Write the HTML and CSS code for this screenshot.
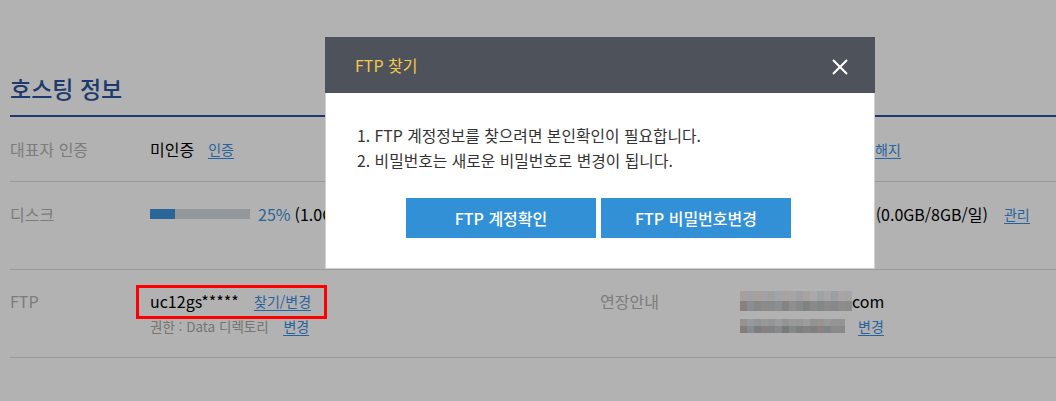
FILE: index.html
```html
<!DOCTYPE html>
<html lang="ko">
<head>
<meta charset="utf-8">
<title>호스팅 정보</title>
<link rel="stylesheet" href="styles.css">
</head>
<body>
<main class="page">
  <h2 class="section-title">호스팅 정보</h2>
  <div class="info">
    <div class="row row--first">
      <div class="label">대표자 인증</div>
      <div class="value">미인증 <a class="link" href="#">인증</a></div>
      <div class="label"></div>
      <div class="value"><span class="spacer"></span><a class="link link--flush" href="#">해지</a></div>
    </div>
    <div class="row row--disk">
      <div class="label">디스크</div>
      <div class="value">
        <span class="bar"><span class="bar-fill" style="width:25%"></span></span>
        <span class="pct">25%</span> (1.0GB/4GB)
      </div>
      <div class="label"></div>
      <div class="value">
        <span class="bar"><span class="bar-fill" style="width:0%"></span></span>
        <span class="pct">0%</span> (0.0GB/8GB/일) <a class="link link--wide" href="#">관리</a>
      </div>
    </div>
    <div class="row row--ftp">
      <div class="label">FTP</div>
      <div class="value stack">
        <div class="line"><span class="marked">uc12gs***** <a class="link" href="#">찾기/변경</a></span></div>
        <div class="line sub">권한 : Data 디렉토리 <a class="link" href="#">변경</a></div>
      </div>
      <div class="label">연장안내</div>
      <div class="value stack">
        <div class="line"><span class="mosaic mosaic--a"></span>com</div>
        <div class="line"><span class="mosaic mosaic--b"></span><a class="link" href="#">변경</a></div>
      </div>
    </div>
  </div>
</main>

<div class="overlay"></div>

<section class="modal" role="dialog" aria-label="FTP 찾기">
  <header class="modal-head">
    <h3 class="modal-title">FTP 찾기</h3>
    <button class="modal-close" type="button" aria-label="닫기">
      <svg width="16" height="16" viewBox="0 0 16 16"><path d="M1 1L15 15M15 1L1 15" stroke="#fff" stroke-width="2" fill="none"/></svg>
    </button>
  </header>
  <div class="modal-body">
    <ol class="notice">
      <li>1. FTP 계정정보를 찾으려면 본인확인이 필요합니다.</li>
      <li>2. 비밀번호는 새로운 비밀번호로 변경이 됩니다.</li>
    </ol>
    <div class="actions">
      <button class="btn" type="button">FTP 계정확인</button>
      <button class="btn" type="button">FTP 비밀번호변경</button>
    </div>
  </div>
</section>
</body>
</html>
```

FILE: styles.css
```css
* { box-sizing: border-box; }
html, body { margin: 0; padding: 0; }
body {
  background: #fff;
  font-family: "Noto Sans CJK KR", "Noto Sans", sans-serif;
  color: #000;
  overflow: hidden;
  width: 1056px;
  height: 401px;
}
.page {
  padding: 70px 0 0 10px;
}
.section-title {
  margin: 0;
  font-size: 23px;
  line-height: 36px;
  font-weight: 500;
  color: #29549d;
  padding-bottom: 9px;
  border-bottom: 2px solid #29549d;
}
.row {
  display: grid;
  grid-template-columns: 140px 450px 140px 1fr;
  padding: 20px 0;
  border-bottom: 1px solid #dcdcdc;
  font-size: 16px;
  line-height: 24px;
}
.row--disk { padding-bottom: 43px; }
.row--ftp { padding: 19px 0 19px; }
.label { color: #b2b2b2; }
.value { display: flex; align-items: center; white-space: nowrap; }
.value.stack { flex-direction: column; align-items: flex-start; }
.line { display: flex; align-items: center; height: 24px; white-space: pre; }
.line + .line { margin-top: 1px; }
.sub { font-size: 13.5px; color: #a8a8a8; }
.link {
  color: #3a8ee6;
  text-decoration: none;
  border-bottom: 1px solid #3a8ee6;
  line-height: 18px;
  display: inline-block;
  margin-left: 14px;
  font-size: 14px;
}
.link--flush { margin-left: 0; }
.link--wide { margin-left: 16px; }
.sub .link { margin-left: 11px; }
.spacer { width: 135px; }
.bar {
  width: 100px;
  height: 10px;
  background: #d4d8db;
  display: inline-block;
  margin-right: 8px;
}
.bar-fill { display: block; height: 100%; background: #3e92db; }
.pct { color: #3e92db; margin-right: 4px; }
.marked { position: relative; display: inline-flex; align-items: center; white-space: pre; font-size: 16px; }
.marked .link { margin-left: 11px; }
.marked::after {
  content: "";
  position: absolute;
  left: -14px; right: -16px; top: -4px; bottom: -6px;
  border: 3px solid #ff0000;
  z-index: 30;
}
.mosaic {
  display: inline-block;
  background-repeat: no-repeat;
}
.mosaic--a {
  width: 112px;
  height: 20px;
  background-image:
    linear-gradient(90deg, #f3e2e2 0 7px, #e3e9ee 7px 14px, #f1e4e4 14px 21px, #e9e9ee 21px 28px, #e8e4e4 28px 35px, #e6ecf0 35px 42px, #f0eaea 42px 49px, #ececec 49px 56px, #e6e6ea 56px 63px, #eeeae6 63px 70px, #f2f2f2 70px 77px, #e5eaea 77px 84px, #eeeeee 84px 91px, #e0e4e8 91px 98px, #f0ecec 98px 105px, #ededed 105px 112px),
    linear-gradient(90deg, #c4b8b8 0 7px, #c6ccd2 7px 14px, #c2c4c4 14px 21px, #cbc6c6 21px 28px, #c4c8cc 28px 35px, #c9cdcd 35px 42px, #bdbdbd 42px 49px, #d0cccc 49px 56px, #c2c6c6 56px 63px, #b8bcbc 63px 70px, #c8c4c4 70px 77px, #bac2c2 77px 84px, #c6c6c6 84px 91px, #c0c4c8 91px 98px, #cacaca 98px 105px, #c8c8c8 105px 112px);
  background-size: 100% 10px, 100% 10px;
  background-position: 0 0, 0 10px;
}
.mosaic--b {
  width: 105px;
  height: 14px;
  background-image:
    linear-gradient(90deg, #d9d2d2 0 7px, #dcdcdc 7px 14px, #d0d4da 14px 21px, #dadada 21px 28px, #d6d6d6 28px 35px, #e0e0e0 35px 42px, #d4d4d4 42px 49px, #dcdcdc 49px 56px, #d8d8d8 56px 63px, #e0e0e0 63px 70px, #d2d2d2 70px 77px, #dad2d2 77px 84px, #d8dcdc 84px 91px, #d4d4d4 91px 105px),
    linear-gradient(90deg, #bcb4b4 0 7px, #c2c6cc 7px 14px, #aeb2b8 14px 21px, #c0b8b8 21px 28px, #b8bcc0 28px 35px, #c4c4c4 35px 42px, #aab0b0 42px 49px, #c2c2c2 49px 56px, #b0b6b6 56px 63px, #bcbcbc 63px 70px, #b6b6b6 70px 77px, #c8bcbc 77px 84px, #b8bec4 84px 91px, #c4c4c4 91px 105px);
  background-size: 100% 7px, 100% 7px;
  background-position: 0 0, 0 7px;
}
.mosaic--b + .link { margin-left: 13px; }

.overlay {
  position: fixed;
  inset: 0;
  background: rgba(0, 0, 0, 0.3);
  z-index: 10;
}
.modal {
  position: absolute;
  top: 37px;
  left: 325px;
  width: 550px;
  z-index: 20;
  background: #fff;
}
.modal-head {
  height: 56px;
  background: #4e525b;
  display: flex;
  align-items: center;
  justify-content: space-between;
  padding: 0 27px 0 30px;
}
.modal-title {
  margin: 0;
  font-size: 16px;
  font-weight: 400;
  color: #f5c94c;
}
.modal-close {
  border: 0;
  background: none;
  padding: 0;
  width: 16px;
  height: 16px;
  display: flex;
  margin-top: 4px;
}
.modal-body {
  border: 1px solid #d0d0d0;
  border-top: 0;
  padding: 30px 28px 30px 31px;
}
.notice {
  list-style: none;
  margin: 0;
  padding: 0;
  font-size: 15.8px;
  line-height: 25px;
  color: #333;
}
.actions {
  display: flex;
  justify-content: center;
  gap: 5px;
  margin: 25px 0 0 -6px;
}
.btn {
  width: 190px;
  height: 40px;
  border: 0;
  background: #3190d6;
  color: #fff;
  font-family: inherit;
  font-size: 16px;
  font-weight: 500;
}
```
